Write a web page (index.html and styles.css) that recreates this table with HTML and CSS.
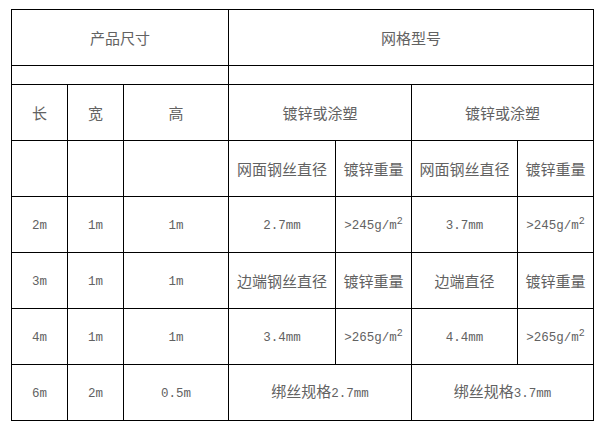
FILE: index.html
```html
<!DOCTYPE html>
<html lang="zh">
<head>
<meta charset="utf-8">
<title>产品尺寸</title>
<link rel="stylesheet" href="styles.css">
</head>
<body>
<table class="spec">
  <colgroup>
    <col class="c56"><col class="c56"><col class="c105"><col class="c107"><col class="c76"><col class="c106"><col class="c76">
  </colgroup>
  <tr class="tall">
    <td colspan="3">产品尺寸</td>
    <td colspan="4">网格型号</td>
  </tr>
  <tr class="short">
    <td colspan="3"></td>
    <td colspan="4"></td>
  </tr>
  <tr class="tall">
    <td>长</td><td>宽</td><td>高</td>
    <td colspan="2">镀锌或涂塑</td>
    <td colspan="2">镀锌或涂塑</td>
  </tr>
  <tr class="tall">
    <td></td><td></td><td></td>
    <td>网面钢丝直径</td><td>镀锌重量</td><td>网面钢丝直径</td><td>镀锌重量</td>
  </tr>
  <tr class="tall">
    <td><span class="a">2m</span></td><td><span class="a">1m</span></td><td><span class="a">1m</span></td>
    <td><span class="a">2.7mm</span></td><td><span class="a">&gt;245g/m<sup>2</sup></span></td>
    <td><span class="a">3.7mm</span></td><td><span class="a">&gt;245g/m<sup>2</sup></span></td>
  </tr>
  <tr class="tall">
    <td><span class="a">3m</span></td><td><span class="a">1m</span></td><td><span class="a">1m</span></td>
    <td>边端钢丝直径</td><td>镀锌重量</td><td>边端直径</td><td>镀锌重量</td>
  </tr>
  <tr class="tall">
    <td><span class="a">4m</span></td><td><span class="a">1m</span></td><td><span class="a">1m</span></td>
    <td><span class="a">3.4mm</span></td><td><span class="a">&gt;265g/m<sup>2</sup></span></td>
    <td><span class="a">4.4mm</span></td><td><span class="a">&gt;265g/m<sup>2</sup></span></td>
  </tr>
  <tr class="tall">
    <td><span class="a">6m</span></td><td><span class="a">2m</span></td><td><span class="a">0.5m</span></td>
    <td colspan="2">绑丝规格<span class="a">2.7mm</span></td>
    <td colspan="2">绑丝规格<span class="a">3.7mm</span></td>
  </tr>
</table>
</body>
</html>
```
FILE: styles.css
```css
html, body {
  margin: 0;
  padding: 0;
  background: #ffffff;
}
body {
  padding: 9px 0 0 11px;
  font-family: "Noto Sans CJK SC", "DejaVu Sans", sans-serif;
  font-size: 15px;
  color: #626262;
}
.spec {
  border-collapse: collapse;
  table-layout: fixed;
  width: 583px;
}
.c56 { width: 56px; }
.c105 { width: 105px; }
.c107 { width: 107px; }
.c76 { width: 76px; }
.c106 { width: 106px; }
.spec td {
  border: 1px solid #000000;
  padding: 0;
  text-align: center;
  vertical-align: middle;
  line-height: 18px;
  white-space: nowrap;
  overflow: hidden;
}
.tall { height: 56px; }
.short { height: 19px; }
.a {
  font-family: "Liberation Mono", monospace;
  font-size: 12.5px;
}
.a sup {
  font-size: 10px;
  line-height: 0;
  vertical-align: 5px;
}
```
